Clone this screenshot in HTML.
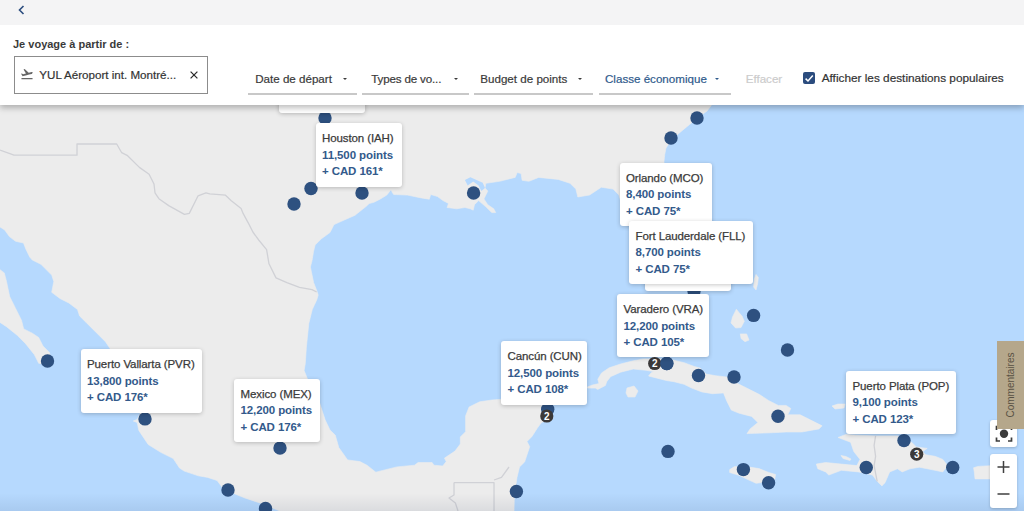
<!DOCTYPE html>
<html><head><meta charset="utf-8"><style>
*{margin:0;padding:0;box-sizing:border-box}
html,body{width:1024px;height:511px;overflow:hidden;background:#fff;font-family:"Liberation Sans",sans-serif}
#root{position:relative;width:1024px;height:511px;overflow:hidden}
.pop{position:absolute;background:#fff;border-radius:3px;box-shadow:0 1px 4px rgba(0,0,0,.22);padding:9.21px 0 0 6.5px;font-size:11.5px;line-height:16.55px;white-space:nowrap;letter-spacing:-0.1px}
.pop div{height:16.55px;line-height:normal}
.pop .n{color:#3a3a3a;-webkit-text-stroke:0.25px #3a3a3a}
.pop .b{color:#335a8b;font-weight:bold}
#top{position:absolute;left:0;top:0;width:1024px;height:25px;background:#f4f4f5}
#hdr{position:absolute;left:0;top:25px;width:1024px;height:79.7px;background:#fff;box-shadow:0 3px 6px rgba(0,0,0,.26)}
.abs{position:absolute;white-space:nowrap}
</style></head><body><div id="root">
<svg width="1024" height="511" viewBox="0 0 1024 511" style="position:absolute;left:0;top:0">
<rect width="1024" height="511" fill="#b6d9fe"/>
<g fill="#ececec" stroke="#ececec" stroke-width="0.6" stroke-linejoin="round">
<polygon points="0,90 725,90 715,100 711.2,105.5 707.1,111 697.5,117.8 689.3,124.7 681.1,131.5 671.5,139.7 666,148 664.7,154.8 664,161.6 666,190 680,225 695,260 700,280 690,292 670,280 650,250 625,215 618.9,195 613.1,189.1 601.3,187.2 589.6,195 577.8,197 575.9,189.1 570,183.3 558.3,179.4 538.7,177.4 528.9,181.3 522.1,180.3 521.1,173.5 517.2,172.5 515.2,177.4 499.6,181.3 485.9,183.3 485,188 487.8,191.1 483.9,198.9 487.8,204.8 493.7,208.7 495.7,212.6 491.7,212.6 485.9,206.8 478.6,200.6 474.5,204.7 473.2,210.2 470.4,208.8 464.9,207.5 456.7,208.8 447.1,207.5 448.5,203.4 443,200.6 437.5,196.5 430.7,194.5 429.3,199.2 421.1,197.9 407.4,195.1 393.7,194.5 392.3,192.4 391,189.7 386.8,195.1 380,199.2 373.9,202.3 369.2,203.5 366.9,205.8 355.1,215.2 334,224.6 330,232.5 321.4,238.8 315.1,245 313.6,251.3 312,260.7 310.4,267 312,274.8 313.6,282.6 316.7,290.4 318.2,295.1 316.7,300 312.3,309.4 308.8,323.5 306.4,347 305.3,363.4 304.1,370.5 308.8,382.2 318.2,398.6 325.2,420 330,430 335.3,435.2 338.8,447.6 347.6,459.9 359.9,461.6 367,465.2 375.8,472.2 382.8,470.4 396.9,466.9 414.5,465.2 418.1,462.5 432.1,462.5 433.9,465.2 442.7,466 446.2,461.6 444.5,458.1 455,451.1 460.3,444 460.3,437 465.6,431.7 465.6,415.9 469.1,407 479.7,401.8 492,400 499,399.5 520,398 545,402 549,410 553,414 548,419 541,423 537.4,428 532,436.4 527,441.5 529.7,446.7 524.6,462 519.5,467 517,477.4 514.4,495 514,511 280,511 270,507 260,503 245,498 235,494 221.8,486.8 217.1,480.5 207.7,477.4 198.3,475.8 184.2,471.1 179.5,468 173.3,458.6 160.7,452.3 148.2,444.5 138.8,430.4 137.2,422.5 133.3,421 137.2,419.4 140.4,413 130,390 118,370 114,356 109.8,348.2 105.5,341.8 99,335.3 92.6,328.9 86.1,322.4 79.6,316 77.5,309.5 68.9,303 60.3,298.7 51.7,292.3 53.8,281.5 51.7,275.1 45.2,268.6 40.9,264.3 32.3,260 29.7,257 25.8,249 23.5,243 15.6,241.3 9.4,236.6 4.7,230 0,227"/>
<polygon points="0,269.7 4.3,272.9 6.5,281.5 9.7,296.6 15.1,307.4 21.5,320.3 23.7,328.9 32.3,333.2 38.7,337.5 43,346.1 49.5,352.6 50.6,359 45,364 38.7,363.3 34.4,354.7 25.8,343.9 17.2,335.3 6.5,326.7 0,322.4"/>
<polygon points="587.6,386.8 592.7,384.9 599,383.6 597.8,379.2 601.6,372.9 609.2,367.8 620.6,364 633.3,360.8 643.5,358.9 651,358.9 662,359 674,360.2 684,362.7 694.3,366.5 700,368 706.3,374.1 715.7,375.7 728.2,377.2 737.6,383.5 750.1,389.8 759.5,394.5 768.9,400.7 778.3,405.4 786.1,405.4 790.8,408.5 787.7,414.8 800.2,414.8 812.7,421.1 822.1,425.8 819,428.9 801.8,432 786.1,432 770.5,432.8 747,433.6 750.1,428.9 757.9,422.6 751.7,416.4 739.1,413.2 731.3,410.1 726.6,400.7 723.5,392.9 712.5,393.7 701.9,391.9 691.7,388.1 684.1,384.3 674,381.7 666.3,380.5 656.2,377.9 648.6,376 651,372.9 653.6,371.6 646,370.3 633.3,369 620.6,372.2 610.5,376.7 606.7,381.7 605.4,385.5 597.8,389.4 595.2,388.1 587.6,388.1"/>
<polygon points="627,388 634,386 638,391 635,397 628,397 626,393"/>
<polygon points="729.7,469.6 734.6,466.6 749.2,467.1 759,468.6 768.8,472.5 775.6,474.5 774.7,479.3 763.9,482.3 756.1,483.3 747.3,479.3 739.4,475.4 729.7,472.5"/>
<polygon points="838.1,437.5 845.9,434.4 856.9,435.2 875.6,435.9 897.5,435.9 911.6,442.2 916.3,446.9 927.2,448.4 922.5,451.6 925.6,454.7 935,456.3 942.8,459.4 947.5,465.6 942.8,471.9 935,470.3 919.4,467.2 910,468.8 902.2,471.9 897.5,468.8 889.7,471.9 885,482.8 881.9,485.9 877.2,481.3 872.5,475 858.4,471.9 841.3,470.3 828.8,475 825.6,471.9 817.8,468.8 816.3,464.1 825.6,462.5 841.3,464.1 856.9,465.6 860,459.4 853.8,451.6 850.6,442.2"/>
<polygon points="841,455.5 846,456.5 851,459 850,460.5 843,458.5"/>
<polygon points="756,274.4 758.3,277.5 757.6,283.8 756,290 753.6,286.9 754.4,279"/>
<polygon points="736.4,309.2 738.5,312 742,316 744.3,321.3 741,327.6 735.6,328 731,322.9 732.5,317"/>
<polygon points="740.3,333.9 746.6,333.9 749,340.1 745,341.7 741.1,338.6"/>
<polygon points="832,406 838,404 845,404 844,408 835,409"/>
<polygon points="973.6,467.8 977.8,466.4 990.3,465.7 990.3,478.9 975,478.9 974.3,472"/>
</g>
<polygon points="467.7,185.5 464.9,180.1 470.4,177.3 482.7,182.8 485,188 481.4,191 478.6,185.5 473.2,181.4" fill="#b6d9fe"/>
<g fill="none" stroke="#d0d1d6" stroke-width="1.3" stroke-linejoin="round">
<polyline points="0,150 14,155.2 77,155.2 77,144 116.7,144 121.7,152.7 127.6,155.7 139.4,167.4 149.1,174.2 154,184 155,192.8 158.9,198.7 168.7,205.6 184.4,214.4 189.3,213.4 198.1,195.8 205.9,192.8 209.8,193.8 225.5,195.2 231.3,200.7 241.1,208.5 243.1,213.4 248.9,224.1 252.9,232 258.7,240 266.6,249.7 269,263.8 276,277.9 286.9,282.6 299.5,287.3 312,289.6 316.7,292"/>
<polyline points="454,482.6 494,482.6 494,511"/>
<polyline points="494,480 501.5,477.4 509,467"/>
<polyline points="454,482.6 454,495 449,498 455.4,503 458,511"/>
<polyline points="875.6,435.9 874.1,445.3 875.6,456.3 874.1,465.6 877.2,481.3"/>
</g>
<g fill="#2e5180">
<circle cx="325" cy="118" r="6.7"/>
<circle cx="311" cy="188.5" r="6.7"/>
<circle cx="294" cy="204" r="6.7"/>
<circle cx="362" cy="193" r="6.7"/>
<circle cx="473.6" cy="193" r="6.7"/>
<circle cx="697" cy="118" r="6.7"/>
<circle cx="671" cy="138" r="6.7"/>
<circle cx="694" cy="291" r="6.7"/>
<circle cx="753.6" cy="315.4" r="6.7"/>
<circle cx="787.5" cy="350" r="6.7"/>
<circle cx="666.8" cy="363.5" r="6.7"/>
<circle cx="698.5" cy="375.5" r="6.7"/>
<circle cx="734" cy="377" r="6.7"/>
<circle cx="778" cy="416.2" r="6.7"/>
<circle cx="668" cy="451.4" r="6.7"/>
<circle cx="743.4" cy="469.6" r="6.7"/>
<circle cx="768.6" cy="482.8" r="6.7"/>
<circle cx="866.25" cy="467.5" r="6.7"/>
<circle cx="904" cy="440.6" r="6.7"/>
<circle cx="952.7" cy="467.5" r="6.7"/>
<circle cx="547.7" cy="409.3" r="6.7"/>
<circle cx="516.4" cy="491.5" r="6.7"/>
<circle cx="47.5" cy="361" r="6.7"/>
<circle cx="145" cy="418.9" r="6.7"/>
<circle cx="280" cy="448.1" r="6.7"/>
<circle cx="228" cy="490" r="6.7"/>
<circle cx="265.5" cy="508.5" r="6.7"/>
</g>
<circle cx="654.7" cy="363.5" r="6.6" fill="#3b3939"/><text x="654.7" y="367.4" text-anchor="middle" font-family="Liberation Sans" font-weight="bold" font-size="10" fill="#fff">2</text>
<circle cx="666.8" cy="363.5" r="6.7" fill="#2e5180"/>
<circle cx="546.8" cy="416" r="6.6" fill="#3b3939"/><text x="546.8" y="419.9" text-anchor="middle" font-family="Liberation Sans" font-weight="bold" font-size="10" fill="#fff">2</text>
<circle cx="916.7" cy="454.2" r="6.6" fill="#3b3939"/><text x="916.7" y="458.1" text-anchor="middle" font-family="Liberation Sans" font-weight="bold" font-size="10" fill="#fff">3</text>
</svg>
<div class="pop" style="left:279px;top:40px;width:86px;height:73px"></div>
<div class="pop" style="left:645px;top:227px;width:86px;height:64px"></div>
<div class="pop" style="left:315.5px;top:123px;width:86px;height:64px"><div class="n">Houston (IAH)</div><div class="b">11,500 points</div><div class="b">+ CAD 161*</div></div>
<div class="pop" style="left:619.5px;top:162.5px;width:92px;height:63px"><div class="n">Orlando (MCO)</div><div class="b">8,400 points</div><div class="b">+ CAD 75*</div></div>
<div class="pop" style="left:629px;top:220.5px;width:124px;height:63px"><div class="n">Fort Lauderdale (FLL)</div><div class="b">8,700 points</div><div class="b">+ CAD 75*</div></div>
<div class="pop" style="left:617px;top:294px;width:92px;height:63px"><div class="n">Varadero (VRA)</div><div class="b">12,200 points</div><div class="b">+ CAD 105*</div></div>
<div class="pop" style="left:501px;top:341px;width:86px;height:63.5px"><div class="n">Canc&uacute;n (CUN)</div><div class="b">12,500 points</div><div class="b">+ CAD 108*</div></div>
<div class="pop" style="left:80.5px;top:349px;width:121px;height:63.5px"><div class="n">Puerto Vallarta (PVR)</div><div class="b">13,800 points</div><div class="b">+ CAD 176*</div></div>
<div class="pop" style="left:234px;top:378.5px;width:85.5px;height:63.5px"><div class="n">Mexico (MEX)</div><div class="b">12,200 points</div><div class="b">+ CAD 176*</div></div>
<div class="pop" style="left:846px;top:370.5px;width:110px;height:63.5px"><div class="n">Puerto Plata (POP)</div><div class="b">9,100 points</div><div class="b">+ CAD 123*</div></div>
<div id="hdr"></div>
<div id="top"></div>
<svg class="abs" style="left:17px;top:5px" width="9" height="10" viewBox="0 0 9 10"><path d="M6.5 1 L2.5 5 L6.5 9" fill="none" stroke="#2b4c7e" stroke-width="1.6"/></svg>
<div class="abs" style="left:13px;top:38.37px;font-size:11px;color:#3a3a3a;font-weight:bold;letter-spacing:0px;">Je voyage &agrave; partir de :</div>
<div class="abs" style="left:13.5px;top:55.5px;width:194px;height:38px;border:1px solid #8c8c8c"></div>
<svg class="abs" style="left:19.7px;top:67.4px" width="14" height="14" viewBox="0 0 24 24"><path fill="#666" d="M2.5 19h19v2h-19zm19.57-9.36c-.21-.8-1.04-1.28-1.84-1.06L14.92 10l-6.9-6.43-1.93.51 4.14 7.17-4.97 1.33-1.97-1.54-1.45.39 1.82 3.16.77 1.33 1.6-.43 5.31-1.42 4.35-1.16L19.97 12c.8-.23 1.28-1.05 1.07-1.85z"/></svg>
<div class="abs" style="left:39.3px;top:68.32px;font-size:11.6px;color:#333;font-weight:normal;letter-spacing:0px;-webkit-text-stroke:0.2px #333;">YUL A&eacute;roport int. Montr&eacute;...</div>
<svg class="abs" style="left:189.5px;top:71px" width="8" height="8" viewBox="0 0 8 8"><path d="M0.6 0.6 L7.4 7.4 M7.4 0.6 L0.6 7.4" stroke="#2a2a2a" stroke-width="1.25"/></svg>
<div class="abs" style="left:248px;top:93px;width:109px;height:1.6px;background:#c8c8c8"></div><div class="abs" style="left:255.2px;top:72.42px;font-size:11.6px;color:#3a3a3a;font-weight:normal;letter-spacing:0px;-webkit-text-stroke:0.2px #3a3a3a;">Date de d&eacute;part</div><div class="abs" style="left:342.85px;top:77.6px;width:0;height:0;border-left:2.4px solid transparent;border-right:2.4px solid transparent;border-top:2.5px solid #3a3a3a"></div>
<div class="abs" style="left:362px;top:93px;width:106.5px;height:1.6px;background:#c8c8c8"></div><div class="abs" style="left:371.2px;top:72.42px;font-size:11.6px;color:#3a3a3a;font-weight:normal;letter-spacing:-0.15px;-webkit-text-stroke:0.2px #3a3a3a;">Types de vo...</div><div class="abs" style="left:453.60px;top:77.6px;width:0;height:0;border-left:2.4px solid transparent;border-right:2.4px solid transparent;border-top:2.5px solid #3a3a3a"></div>
<div class="abs" style="left:474px;top:93px;width:119px;height:1.6px;background:#c8c8c8"></div><div class="abs" style="left:480.3px;top:72.42px;font-size:11.6px;color:#3a3a3a;font-weight:normal;letter-spacing:0px;-webkit-text-stroke:0.2px #3a3a3a;">Budget de points</div><div class="abs" style="left:578.45px;top:77.6px;width:0;height:0;border-left:2.4px solid transparent;border-right:2.4px solid transparent;border-top:2.5px solid #3a3a3a"></div>
<div class="abs" style="left:599px;top:93px;width:131.5px;height:1.6px;background:#c8c8c8"></div><div class="abs" style="left:605px;top:72.42px;font-size:11.6px;color:#2f5a8c;font-weight:normal;letter-spacing:0px;-webkit-text-stroke:0.2px #2f5a8c;">Classe &eacute;conomique</div><div class="abs" style="left:715.40px;top:77.6px;width:0;height:0;border-left:2.4px solid transparent;border-right:2.4px solid transparent;border-top:2.5px solid #2f5a8c"></div>
<div class="abs" style="left:745.7px;top:71.52px;font-size:11.6px;color:#cccccc;font-weight:normal;letter-spacing:0px;-webkit-text-stroke:0.2px #cccccc;">Effacer</div>
<div class="abs" style="left:803px;top:72px;width:12.3px;height:12px;background:#2b4c7e;border-radius:2px"></div>
<svg class="abs" style="left:803px;top:72px" width="12" height="12" viewBox="0 0 12 12"><path d="M2.6 6.6 L5 9 L9.8 3.6" fill="none" stroke="#fff" stroke-width="1.5"/></svg>
<div class="abs" style="left:821.7px;top:70.93px;font-size:11.8px;color:#333;font-weight:normal;letter-spacing:0px;-webkit-text-stroke:0.2px #333;">Afficher les destinations populaires</div>
<div class="abs" style="left:0;top:493px;width:1024px;height:18px;background:linear-gradient(rgba(0,20,60,0),rgba(0,20,60,.075))"></div>
<div class="abs" style="left:989.5px;top:419.5px;width:27.5px;height:27px;background:#fff;border-radius:3px;box-shadow:0 1px 3px rgba(0,0,0,.2)"></div>
<svg class="abs" style="left:989.5px;top:419.5px" width="28" height="27" viewBox="0 0 28 27"><path d="M6.5 10 V6.5 H10 M18 6.5 H21.5 V10 M21.5 17.5 V21 H18 M10 21 H6.5 V17.5" fill="none" stroke="#3c3c3c" stroke-width="1.7"/><circle cx="14" cy="13.8" r="4.2" fill="#3c3c3c"/></svg>
<div class="abs" style="left:997px;top:341px;width:27px;height:88px;background:#b5a78b"></div>
<div class="abs" style="left:1011px;top:384.5px;font-size:10px;line-height:10px;color:#595244;transform:translate(-50%,-50%) rotate(-90deg)">Commentaires</div>
<div class="abs" style="left:990px;top:454px;width:27px;height:54px;background:#fff;border-radius:3px;box-shadow:0 1px 3px rgba(0,0,0,.2)"></div>
<svg class="abs" style="left:990px;top:454px" width="27" height="54" viewBox="0 0 27 54"><path d="M7.5 13 H19.5 M13.5 7 V19 M7.5 40 H19.5" stroke="#404040" stroke-width="1.5"/></svg>
</div></body></html>
